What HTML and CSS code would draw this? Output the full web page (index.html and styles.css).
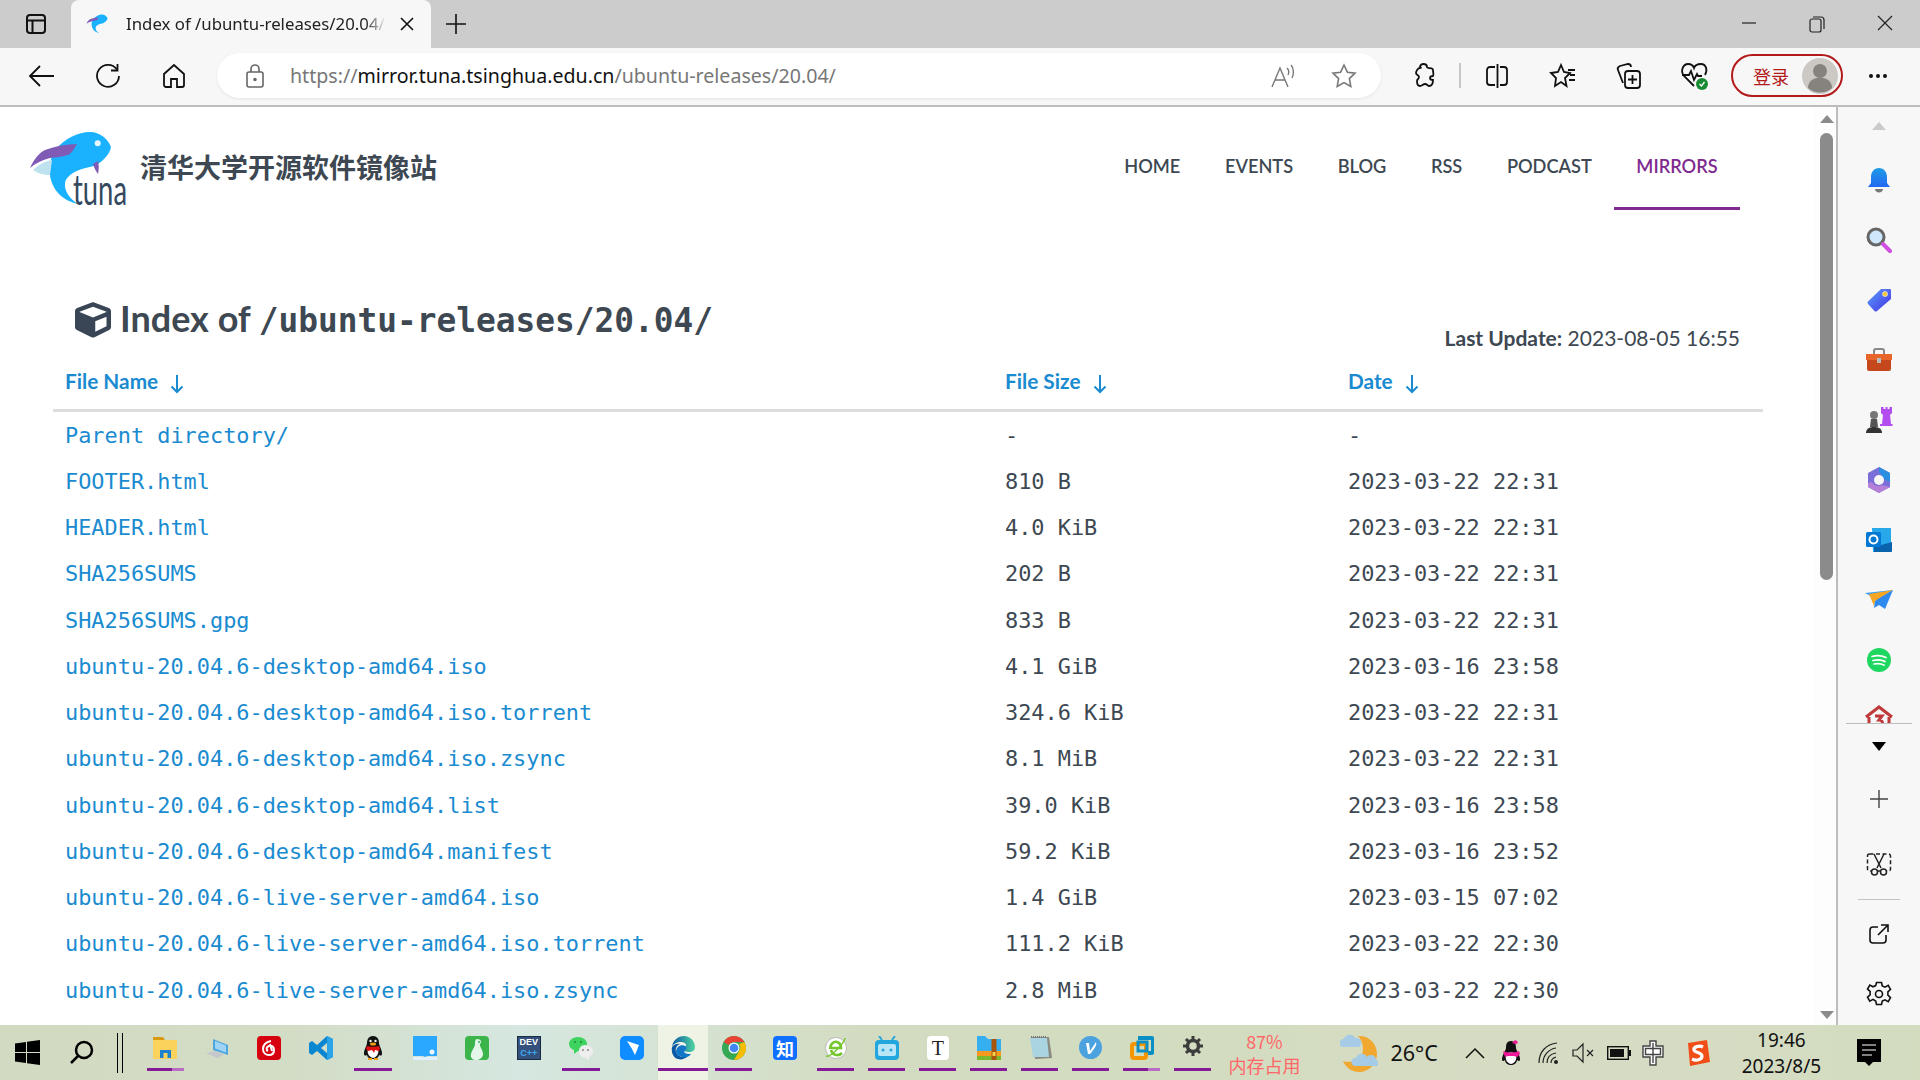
FILE: index.html
```html
<!DOCTYPE html>
<html>
<head>
    <title>Index of /ubuntu-releases/20.04/</title>
    <link rel="stylesheet" href="styles.css">
</head>
<body>

<!-- browser title bar -->
<div class="titlebar">
    <div class="tabs-btn">
        <svg width="24" height="24" viewBox="0 0 24 24" fill="none" stroke="#111" stroke-width="2"><rect x="3" y="3" width="18" height="18" rx="3"/><path d="M3 8.500h18M8.500 8.500V21"/></svg>
    </div>
    <div class="tab">
        <svg class="tab-icon" width="26" height="26" viewBox="0 0 100 76"><path d="M83 16C80 8 72 1 62 1 50 1 36 8 28 18c-6 8-7 18-6 26 2 16 14 26 28 29-8-5-14-13-13-21 1-8 13-14 25-16 10-2 20-12 21-20z" fill="#1ab2ff"/><path d="M2 37C6 28 11 22 17 19c10-4 22-6 32-6-3 5-5 9-9 11-6 2-12 2-18 3C14 29 8 32 2 37z" fill="#7f5bb5"/></svg>
        <span class="tab-title">Index of /ubuntu-releases/20.04/</span>
        <svg class="tab-close" width="16" height="16" viewBox="0 0 16 16" stroke="#111" stroke-width="1.600"><path d="M2 2l12 12M14 2L2 14"/></svg>
    </div>
    <svg class="new-tab" width="22" height="22" viewBox="0 0 22 22" stroke="#111" stroke-width="1.600"><path d="M11 1v20M1 11h20"/></svg>
    <div class="window-btns">
        <div class="window-btn"><svg width="16" height="16" viewBox="0 0 16 16" stroke="#222" stroke-width="1.200"><path d="M1 8h14"/></svg></div>
        <div class="window-btn"><svg width="18" height="18" viewBox="0 0 18 18" fill="none" stroke="#222" stroke-width="1.200"><rect x="2" y="4" width="11" height="13" rx="2"/><path d="M5 2h8a3 3 0 0 1 3 3v9"/></svg></div>
        <div class="window-btn"><svg width="16" height="16" viewBox="0 0 16 16" stroke="#222" stroke-width="1.200"><path d="M1 1l14 14M15 1L1 15"/></svg></div>
    </div>
</div>

<!-- address bar row -->
<div class="toolbar">
    <div class="tool-btn"><svg width="28" height="24" viewBox="0 0 28 24" fill="none" stroke="#111" stroke-width="1.800"><path d="M26 12H2M12 2L2 12l10 10"/></svg></div>
    <div class="tool-btn"><svg width="26" height="26" viewBox="0 0 26 26" fill="none" stroke="#111" stroke-width="1.800"><path d="M22 6.500A11 11 0 1 0 24 13"/><path d="M22.500 1v6.500H16"/></svg></div>
    <div class="tool-btn"><svg width="24" height="26" viewBox="0 0 24 26" fill="none" stroke="#111" stroke-width="1.800"><path d="M2 11L12 2l10 9v11a2 2 0 0 1-2 2h-5v-8H9v8H4a2 2 0 0 1-2-2z"/></svg></div>

    <div class="address">
        <svg class="lock" width="20" height="24" viewBox="0 0 20 24" fill="none" stroke="#666" stroke-width="1.600"><rect x="2" y="8" width="16" height="15" rx="2"/><path d="M6 8V5a4 4 0 0 1 8 0v3"/><circle cx="10" cy="15.500" r="1" fill="#666"/></svg>
        <span class="url">https://<b>mirror.tuna.tsinghua.edu.cn</b>/ubuntu-releases/20.04/</span>
        <div class="address-btn address-btn-first"><svg width="26" height="24" viewBox="0 0 26 24" fill="none" stroke="#777" stroke-width="1.400"><path d="M1 23L9 4l8 19M4 16h10"/><path d="M16 4c2 2 2 5 1 7M20 1c3 3 3 9 1 13"/></svg></div>
        <div class="address-btn"><svg width="26" height="26" viewBox="0 0 26 26" fill="none" stroke="#777" stroke-width="1.600"><path d="M13 2l3.400 7.200 7.600 1-5.600 5.400 1.400 7.800-6.800-3.800-6.800 3.800 1.400-7.800L2 10.200l7.600-1z"/></svg></div>
    </div>

    <div class="tool-btn tool-btn-first"><svg width="24" height="26" viewBox="0 0 24 26" fill="none" stroke="#111" stroke-width="1.800"><path d="M8 4c0-4 7-4 7 0 0 2 6 0 6 3 0 2 1 5 0 6-2 0-3 1-3 2s1 2 3 2c0 3-1 6-4 6-1 0-2-2-4-2s-3 2-5 2c-3 0-3-3-3-5s2-2 2-4-3-2-3-4 2-5 4-5 0-1 0-1z"/></svg></div>
    <div class="tool-sep"></div>
    <div class="tool-btn"><svg width="24" height="26" viewBox="0 0 24 26" fill="none" stroke="#111" stroke-width="1.800"><path d="M10 4H5a3 3 0 0 0-3 3v12a3 3 0 0 0 3 3h5M15 4h4a3 3 0 0 1 3 3v12a3 3 0 0 1-3 3h-4M12.500 1v24"/></svg></div>
    <div class="tool-btn"><svg width="28" height="28" viewBox="0 0 28 28" fill="none" stroke="#111" stroke-width="1.800"><path d="M12 3l3 7 6 1-5 5 1.500 8L12 20l-6 4 1-8-5-5 7-1z"/><path d="M19 8h7M21 13h5M20 18h6"/></svg></div>
    <div class="tool-btn"><svg width="26" height="28" viewBox="0 0 26 28" fill="none" stroke="#111" stroke-width="1.800"><path d="M7 21L2 8c-1-2 0-3 2-4l8-2c2 0 3 1 3 3"/><rect x="9" y="9" width="15" height="17" rx="3"/><path d="M16.500 13v9M12 17.500h9"/></svg></div>
    <div class="tool-btn">
        <svg width="30" height="30" viewBox="0 0 30 30" fill="none" stroke="#111" stroke-width="1.800"><path d="M14 25L4 15C0 10 3 3 8 3c3 0 5 1 6 4 1-3 4-4 7-4 5 0 7 6 4 11"/><path d="M2 14h7l2-4 3 9 3-6 1 2h4"/><circle cx="22" cy="23" r="6" fill="#1a8a34" stroke="none"/><path d="M19.500 23l2 2 3-4" stroke="#fff" stroke-width="1.400"/></svg>
    </div>
    <div class="signin">
        <span class="signin-text">登录</span>
        <svg class="avatar" width="36" height="36" viewBox="0 0 36 36"><circle cx="18" cy="18" r="18" fill="#ccc9c5"/><circle cx="18" cy="13" r="7" fill="#86827e"/><path d="M6 30c0-14 24-14 24 0a18 18 0 0 1-24 0z" fill="#86827e"/></svg>
    </div>
    <div class="more-btn"><span></span><span></span><span></span></div>
</div>

<div class="middle">
    <!-- the page itself -->
    <div class="page">
        <div class="site-header">
            <svg class="logo" width="102" height="78" viewBox="0 0 102 78">
                <path d="M83 16C80 8 72 1 62 1 50 1 36 8 28 18c-6 8-7 18-6 26 2 16 14 26 28 29-8-5-14-13-13-21 1-8 13-14 25-16 10-2 20-12 21-20z" fill="#1ab2ff"/>
                <path d="M5 39C10 34 17 30 24 29l-2 15C15 44 9 42 5 39z" fill="#bfe3ee"/>
                <path d="M2 37C6 28 11 22 17 19c10-4 22-6 32-6-3 5-5 9-9 11-6 2-12 2-18 3C14 29 8 32 2 37z" fill="#7f5bb5"/>
                <path d="M65 33l5-3c1 4 1 8 0 13-2-3-4-6-5-10z" fill="#7f5bb5"/>
                <circle cx="69.700" cy="12.300" r="3" fill="#e8f7ff"/>
                <text class="logo-text" x="45" y="74" textLength="54" lengthAdjust="spacingAndGlyphs">tuna</text>
            </svg>
            <div class="site-name">清华大学开源软件镜像站</div>
            <nav class="nav">
                <a>HOME</a>
                <a>EVENTS</a>
                <a>BLOG</a>
                <a>RSS</a>
                <a>PODCAST</a>
                <a class="active">MIRRORS</a>
            </nav>
        </div>

        <div class="index-head">
            <h1>
                <svg class="cube" width="36" height="36" viewBox="0 0 512 512"><path fill-rule="evenodd" d="M239.100 6.300l-208 78C12.400 91.300 0 109.300 0 129.300v225.100c0 18.200 10.300 34.800 26.500 42.900l208 104c13.500 6.800 29.400 6.800 42.900 0l208-104c16.300-8.100 26.500-24.800 26.500-42.900V129.300c0-20-12.400-37.900-31.100-44.900l-208-78C262 2.200 250 2.200 239.100 6.300zM256 68.400l192 72v1.100l-192 78-192-78v-1.100zM288 424.400V275.500l160-65v133.900z" fill="#3a4555"/></svg>
                <span>Index of <code>/ubuntu-releases/20.04/</code></span>
            </h1>
            <div class="last-update"><b>Last Update:</b> 2023-08-05 16:55</div>
        </div>

        <table class="files">
            <colgroup><col class="col-name"><col class="col-size"><col class="col-date"></colgroup>
            <thead>
                <tr>
                    <th>File Name <span class="arrow"><svg width="14" height="20" viewBox="0 0 14 20" fill="none" stroke="currentColor" stroke-width="2"><path d="M7 1v17M1.500 12.500L7 18l5.500-5.500"/></svg></span></th>
                    <th>File Size <span class="arrow"><svg width="14" height="20" viewBox="0 0 14 20" fill="none" stroke="currentColor" stroke-width="2"><path d="M7 1v17M1.500 12.500L7 18l5.500-5.500"/></svg></span></th>
                    <th>Date <span class="arrow"><svg width="14" height="20" viewBox="0 0 14 20" fill="none" stroke="currentColor" stroke-width="2"><path d="M7 1v17M1.500 12.500L7 18l5.500-5.500"/></svg></span></th>
                </tr>
            </thead>
            <tbody>
                <tr><td><a>Parent directory/</a></td><td>-</td><td>-</td></tr>
                <tr><td><a>FOOTER.html</a></td><td>810 B</td><td>2023-03-22 22:31</td></tr>
                <tr><td><a>HEADER.html</a></td><td>4.0 KiB</td><td>2023-03-22 22:31</td></tr>
                <tr><td><a>SHA256SUMS</a></td><td>202 B</td><td>2023-03-22 22:31</td></tr>
                <tr><td><a>SHA256SUMS.gpg</a></td><td>833 B</td><td>2023-03-22 22:31</td></tr>
                <tr><td><a>ubuntu-20.04.6-desktop-amd64.iso</a></td><td>4.1 GiB</td><td>2023-03-16 23:58</td></tr>
                <tr><td><a>ubuntu-20.04.6-desktop-amd64.iso.torrent</a></td><td>324.6 KiB</td><td>2023-03-22 22:31</td></tr>
                <tr><td><a>ubuntu-20.04.6-desktop-amd64.iso.zsync</a></td><td>8.1 MiB</td><td>2023-03-22 22:31</td></tr>
                <tr><td><a>ubuntu-20.04.6-desktop-amd64.list</a></td><td>39.0 KiB</td><td>2023-03-16 23:58</td></tr>
                <tr><td><a>ubuntu-20.04.6-desktop-amd64.manifest</a></td><td>59.2 KiB</td><td>2023-03-16 23:52</td></tr>
                <tr><td><a>ubuntu-20.04.6-live-server-amd64.iso</a></td><td>1.4 GiB</td><td>2023-03-15 07:02</td></tr>
                <tr><td><a>ubuntu-20.04.6-live-server-amd64.iso.torrent</a></td><td>111.2 KiB</td><td>2023-03-22 22:30</td></tr>
                <tr><td><a>ubuntu-20.04.6-live-server-amd64.iso.zsync</a></td><td>2.8 MiB</td><td>2023-03-22 22:30</td></tr>
            </tbody>
        </table>
    </div>

    <div class="scrollbar">
        <div class="scroll-up"></div>
        <div class="scroll-thumb"></div>
        <div class="scroll-down"></div>
    </div>

    <!-- edge sidebar -->
    <div class="sidebar">
        <div class="side-up"></div>
        <div class="side-list">
            <div class="side-item"><svg width="24" height="26" viewBox="0 0 24 26"><defs><linearGradient id="bell" x1="0" y1="0" x2="0" y2="1"><stop offset="0" stop-color="#1e9be8"/><stop offset="1" stop-color="#2468f0"/></linearGradient></defs><path d="M12 1c5 0 8 4 8 9v6l3 4H1l3-4v-6c0-5 3-9 8-9z" fill="url(#bell)"/><path d="M8 22h8c0 2-2 3.500-4 3.500S8 24 8 22z" fill="#777"/></svg></div>
            <div class="side-item"><svg width="26" height="26" viewBox="0 0 26 26"><circle cx="10" cy="10" r="8" fill="#cfe7fa" stroke="#666" stroke-width="3"/><path d="M17 17l7 7" stroke="#d14fe0" stroke-width="4" stroke-linecap="round"/></svg></div>
            <div class="side-item"><svg width="26" height="26" viewBox="0 0 26 26"><defs><linearGradient id="tag" x1="0" y1="0" x2="1" y2="1"><stop offset="0" stop-color="#5aa0ff"/><stop offset="1" stop-color="#4530e0"/></linearGradient></defs><path d="M15 2h9a1 1 0 0 1 1 1v9L11 24a2 2 0 0 1-2.500 0L2 17a2 2 0 0 1 0-2.500z" fill="url(#tag)"/><circle cx="19" cy="7" r="2.500" fill="#f4c430" stroke="#fff" stroke-width=".6"/></svg></div>
            <div class="side-item"><svg width="28" height="24" viewBox="0 0 28 24"><path d="M9 6V3a2 2 0 0 1 2-2h6a2 2 0 0 1 2 2v3" fill="none" stroke="#888" stroke-width="2"/><path d="M1 6h26v6H1z" fill="#e8662a"/><path d="M2 12h24v9a2 2 0 0 1-2 2H4a2 2 0 0 1-2-2z" fill="#c5481c"/><rect x="12" y="10" width="4" height="5" fill="#bbb"/></svg></div>
            <div class="side-item"><svg width="28" height="28" viewBox="0 0 28 28"><path d="M17 1h2.500v2h2V1h2v2h2V1H28v6l-2 2 1 9h1.500v2H16v-2h2l1-9-2-2z" fill="#b44df0" transform="translate(-1 0)"/><circle cx="9" cy="9" r="4" fill="#777"/><path d="M6 13h6l1 8H5z" fill="#555"/><path d="M1 27c0-4 3-6 8-6s8 2 8 6z" fill="#333"/></svg></div>
            <div class="side-item"><svg width="26" height="28" viewBox="0 0 26 28"><path d="M13 1l11 6v14l-11 6L2 21V7z" fill="#7a6ed8"/><path d="M13 1l11 6v9l-8-4c0-3-1-5-3-5z" fill="#2a8fe0"/><path d="M2 17l4-1c2 4 6 5 10 3l8 2-11 6L2 21z" fill="#b67fd8"/><circle cx="13" cy="14" r="5" fill="#f7f7f7"/></svg></div>
            <div class="side-item"><svg width="26" height="26" viewBox="0 0 26 26"><path d="M6 1h19v15l-6 9H7z" fill="#28a8ea"/><path d="M8 20l18-5v9a1 1 0 0 1-1 1H8z" fill="#0a64ad"/><rect x="0" y="5" width="15" height="15" rx="1.500" fill="#0078d4"/><circle cx="7.500" cy="12.500" r="4" fill="none" stroke="#fff" stroke-width="2"/></svg></div>
            <div class="side-item"><svg width="28" height="20" viewBox="0 0 28 20"><path d="M0 3l28-3-12 12z" fill="#3aa0f5"/><path d="M4 4l24-4-18 11-1 5z" fill="#f5a623"/><path d="M10 11L28 0 20 19l-6-4-5 3z" fill="#2f8af0"/></svg></div>
            <div class="side-item"><svg width="24" height="24" viewBox="0 0 24 24" fill="none"><circle cx="12" cy="12" r="12" fill="#1ed760"/><path d="M5 8.500c5-1.500 10-1 14 1M6 12.500c4-1 9-.8 12 1M7 16c3-.7 7-.5 10 1" stroke="#fff" stroke-width="1.700" stroke-linecap="round"/></svg></div>
            <div class="side-item side-house"><svg width="28" height="28" viewBox="0 0 28 28" fill="none" stroke="#c0393b" stroke-width="3"><path d="M1 12L14 2l13 10M4 12v14h20V12"/><path d="M10 11h7l-3 4c3 0 4 2 3 4s-5 2-7 0"/></svg></div>
        </div>
        <div class="side-down"></div>
        <div class="side-btn side-plus"><svg width="20" height="20" viewBox="0 0 20 20" stroke="#444" stroke-width="1.400"><path d="M10 1v18M1 10h18"/></svg></div>
        <div class="side-btn side-shot"><svg width="26" height="24" viewBox="0 0 26 24" fill="none" stroke="#222" stroke-width="1.500"><rect x="1.500" y="1" width="23" height="17" rx="2" stroke-dasharray="4 2.500"/><path d="M8 1l7 14M18 1l-7 14"/><circle cx="8.500" cy="19" r="3" fill="#f7f7f7"/><circle cx="17.500" cy="19" r="3" fill="#f7f7f7"/></svg></div>
        <div class="side-rule"></div>
        <div class="side-btn side-share"><svg width="20" height="20" viewBox="0 0 20 20" fill="none" stroke="#111" stroke-width="1.600"><path d="M9 3H4a3 3 0 0 0-3 3v10a3 3 0 0 0 3 3h10a3 3 0 0 0 3-3v-5M12 1h7v7M19 1L9 11"/></svg></div>
        <div class="side-btn side-gear"><svg width="26" height="26" viewBox="0 0 26 26" fill="none" stroke="#111" stroke-width="1.600"><circle cx="13" cy="13" r="3.500"/><path d="M10.500 1.500h5l.8 3.500 2.700 1.200 3.200-1.800 2.300 4-2.600 2.400v3.400l2.600 2.400-2.300 4-3.200-1.800-2.700 1.200-.8 3.500h-5l-.8-3.500L7 18.400l-3.200 1.800-2.300-4 2.600-2.400v-3.400L1.500 8l2.300-4L7 5.800 9.700 4.600z"/></svg></div>
    </div>
</div>

<!-- windows taskbar -->
<div class="taskbar">
    <div class="task-win"><svg width="25" height="25" viewBox="0 0 25 25" fill="#000"><path d="M0 3.500l11-1.500v10H0zM12 1.800L25 0v12H12zM0 13h11v10L0 21.500zM12 13h13v12l-13-1.800z"/></svg></div>
    <div class="task-search"><svg width="25" height="25" viewBox="0 0 25 25" fill="none" stroke="#000" stroke-width="2.500"><circle cx="15" cy="10" r="8"/><path d="M9 16l-7 7"/></svg></div>
    <div class="task-sep"></div>

    <div class="task-item running part"><svg width="24" height="24" viewBox="0 0 24 24"><path d="M0 1h10l2 3h-12z" fill="#d99a10"/><path d="M0 4h24v19H0z" fill="#fbd35c"/><path d="M7 14h11v8h-3.500v-5h-4v5H7z" fill="#1a80d0"/></svg></div>
    <div class="task-item"><svg width="24" height="24" viewBox="0 0 24 24"><path d="M8 3l15 6v10L8 14z" fill="#4ea6de"/><path d="M10 5l11 4.500v7L10 12.500z" fill="#9fd4f5"/><path d="M1 17l9-2 9 4-7 3z" fill="#c4c8cc"/></svg></div>
    <div class="task-item"><svg width="24" height="24" viewBox="0 0 24 24"><rect width="24" height="24" rx="4" fill="#d7000f"/><path d="M14 5c-5 1-8 4-8 8 0 4 3 6 6 6s5-2 5-5-2-5-5-4-3 4-1 5M13 8l2 7" fill="none" stroke="#fff" stroke-width="2"/></svg></div>
    <div class="task-item"><svg width="24" height="24" viewBox="0 0 24 24"><path d="M18 0l6 3v18l-6 3-10-9-5 4-3-2V7l3-2 5 4zM18 7l-6 5 6 5z" fill="#0a87d0"/><path d="M18 0l6 3v18l-6 3z" fill="#2aa3e8"/></svg></div>
    <div class="task-item running"><svg width="22" height="24" viewBox="0 0 22 24"><path d="M11 0c4 0 6 3 6 7 0 2 3 7 3 10 0 3-1 3-3 2 0 2-3 4-6 4s-6-2-6-4c-2 1-3 1-3-2 0-3 3-8 3-10 0-4 2-7 6-7z" fill="#111"/><path d="M6 13c2-2 8-2 10 0 1 3 0 8-5 9-5-1-6-6-5-9z" fill="#fff"/><path d="M5 10c3 1 9 1 12 0l1 3-1 2-4-1-1 3-2-3-4 1-2-2z" fill="#e01010"/><ellipse cx="11" cy="8" rx="3" ry="1.500" fill="#f5a010"/><circle cx="8.500" cy="5" r="1.200" fill="#fff"/><circle cx="13.500" cy="5" r="1.200" fill="#fff"/><path d="M6 23h4M12 23h4" stroke="#f5a010" stroke-width="2"/></svg></div>
    <div class="task-item"><svg width="24" height="24" viewBox="0 0 24 24"><path d="M0 0h24v20H14l-2 1-2-1H0z" fill="#2aa8ff"/><path d="M0 21h24v3H0z" fill="#dff1ff"/><circle cx="19" cy="16" r="2.500" fill="#e8f6ff"/></svg></div>
    <div class="task-item"><svg width="24" height="24" viewBox="0 0 24 24"><rect width="24" height="24" rx="4" fill="#3bb54a"/><path d="M12 3c4 0 5 3 3 5-1 2 3 6 3 10 0 4-4 6-7 6s-6-2-5-6 3-6 4-9c0-3 0-6 2-6z" fill="#e4f6ea"/><circle cx="14" cy="6" r="1" fill="#3bb54a"/></svg></div>
    <div class="task-item"><div class="dev-icon"><span>DEV</span><span class="cpp">C++</span></div></div>
    <div class="task-item running"><svg width="24" height="24" viewBox="0 0 24 24"><path d="M9 1c5 0 9 3 9 7s-4 7-9 7l-4 3v-4C2 13 0 11 0 8c0-4 4-7 9-7z" fill="#3ed35e"/><path d="M16 9c4 0 8 3 8 6s-2 5-4 6v3l-3-2c-5 0-7-4-7-7s2-6 6-6z" fill="#eee"/><circle cx="6" cy="6" r="1" fill="#1c8a38"/><circle cx="12" cy="6" r="1" fill="#1c8a38"/><circle cx="14" cy="14" r="1" fill="#888"/><circle cx="19" cy="14" r="1" fill="#888"/></svg></div>
    <div class="task-item"><svg width="24" height="24" viewBox="0 0 24 24"><rect width="24" height="24" rx="5" fill="#0f8cff"/><path d="M7 5l12 4-4 10-3-6z" fill="#fff"/></svg></div>
    <div class="task-item task-active running"><svg width="24" height="24" viewBox="0 0 24 24"><defs><linearGradient id="edge" x1="0" y1="0" x2="1" y2="0"><stop offset="0" stop-color="#0c59a4"/><stop offset="1" stop-color="#50d6a0"/></linearGradient></defs><path d="M1 11C2 4 7 0 13 0c6 0 11 5 11 11 0 4-3 5-6 5-4 0-6-2-6-2 0-3 3-3 3-5s-3-3-5-3C6 6 2 8 1 11z" fill="url(#edge)"/><path d="M1 11c2-3 6-4 8-3-3 1-5 4-4 8 1 4 6 6 12 4-3 3-7 4-10 3-5-1-7-7-6-12z" fill="#0c59a4"/><path d="M5 16c0-5 5-8 9-6 3 2 0 4-1 6 2 2 4 2 7 2-2 3-6 4-9 3-4-1-6-3-6-5z" fill="#1277c8"/></svg></div>
    <div class="task-item running"><svg width="24" height="24" viewBox="0 0 24 24"><circle cx="12" cy="12" r="12" fill="#34a853"/><path d="M12 0a12 12 0 0 1 10.400 6H12a6 6 0 0 0-5.200 3L1.700 6A12 12 0 0 1 12 0z" fill="#ea4335"/><path d="M22.400 6A12 12 0 0 1 12 24l5.200-9A6 6 0 0 0 17 8z" fill="#fbbc05"/><circle cx="12" cy="12" r="5.500" fill="#fff"/><circle cx="12" cy="12" r="4.300" fill="#4285f4"/></svg></div>
    <div class="task-item"><div class="zhihu-icon">知</div></div>
    <div class="task-item running"><svg width="24" height="24" viewBox="0 0 24 24" fill="none"><circle cx="12" cy="12" r="10.500" fill="#fff" stroke="#bbb"/><path d="M6 13c0-5 4-8 7-7s4 3 4 6H7m0 2c1 5 7 7 11 3" stroke="#76c72d" stroke-width="2.600"/><path d="M2 20C6 22 20 8 21 2" stroke="#76c72d" stroke-width="1.500"/></svg></div>
    <div class="task-item running"><svg width="24" height="24" viewBox="0 0 24 24" fill="none"><rect y="4" width="24" height="20" rx="4" fill="#21a6dd"/><rect x="3" y="8" width="18" height="12" rx="2" fill="#b8e6f6"/><path d="M7 4L4 0M17 4l3-4" stroke="#21a6dd" stroke-width="2"/><circle cx="8" cy="14" r="1.500" fill="#21a6dd"/><circle cx="16" cy="14" r="1.500" fill="#21a6dd"/></svg></div>
    <div class="task-item running"><div class="typora-icon">T</div></div>
    <div class="task-item running"><svg width="24" height="24" viewBox="0 0 24 24"><path d="M0 0h8l3 3h13v13H0z" fill="#36aff0"/><path d="M0 15h24v5H0z" fill="#f59a1f"/><path d="M0 20h24v4H0z" fill="#7ab82e"/><rect x="14.500" y="3" width="5" height="21" fill="#a8560f"/><rect x="15.500" y="16" width="3" height="4" fill="#f5d04a"/></svg></div>
    <div class="task-item running"><svg width="24" height="24" viewBox="0 0 24 24"><path d="M4 1h17l3 21-17 1z" fill="#8a8a82"/><path d="M2 2h17l2 19H5z" fill="#a9d4e0"/><path d="M3 1h16" stroke="#777" stroke-width="2" stroke-dasharray="1 1"/></svg></div>
    <div class="task-item running"><svg width="23" height="23" viewBox="0 0 23 23"><circle cx="11.500" cy="11.500" r="11.500" fill="#4ba2de"/><path d="M7 7h3l1 8 6-9c1 3-1 6-6 12H9z" fill="#fff"/></svg></div>
    <div class="task-item running part"><svg width="24" height="24" viewBox="0 0 24 24" fill="none"><path d="M8 3h13a2 2 0 0 1 2 2v11a2 2 0 0 1-2 2h-4" stroke="#0a8fc4" stroke-width="4" transform="translate(0 -1)"/><rect x="2" y="8" width="14" height="14" rx="2" stroke="#f59500" stroke-width="4"/><path d="M8 15V6h9v9z" stroke="#0a8fc4" stroke-width="3"/></svg></div>
    <div class="task-item running"><svg width="20" height="20" viewBox="0 0 20 20" fill="none" stroke="#3c3c3c"><circle cx="10" cy="10" r="5.500" stroke-width="3.500"/><path d="M10 0v4M10 16v4M0 10h4M16 10h4M3 3l3 3M14 14l3 3M17 3l-3 3M6 14l-3 3" stroke-width="3"/></svg></div>

    <div class="memory"><span>87%</span><span>内存占用</span></div>
    <div class="weather-icon"><svg width="38" height="38" viewBox="0 0 38 38"><path d="M18 2c10-1 19 7 19 18 0 10-8 18-18 18C12 38 6 34 3 27c10 3 20-2 20-12 0-5-2-10-5-13z" fill="#f0a830"/><path d="M3 13a4 4 0 0 1 1-8 6 6 0 0 1 11-1 5 5 0 0 1 4 9z" fill="#a5cbe6"/><path d="M15 32a4 4 0 0 1 1-8 6 6 0 0 1 11-1 5 5 0 0 1 9 3 3 3 0 0 1 0 6z" fill="#a5cbe6"/></svg></div>
    <div class="temp">26°C</div>
    <div class="tray tray-chevron"><svg width="20" height="12" viewBox="0 0 20 12" fill="none" stroke="#111" stroke-width="1.500"><path d="M1 11l9-9 9 9"/></svg></div>
    <div class="tray tray-qq"><svg width="20" height="28" viewBox="0 0 20 28"><path d="M10 2c4 0 5 3 5 7 0 2 4 7 4 11 0 3-2 2-3 1 0 3-3 5-6 5s-6-2-6-5c-1 1-3 2-3-1 0-4 4-9 4-11 0-4 1-7 5-7z" fill="#111"/><path d="M5 15c2-2 8-2 10 0 1 4 0 9-5 10-5-1-6-6-5-10z" fill="#fff"/><path d="M2 12c5 2 11 2 16 0l1 3-3 3-3-1H7l-3 1z" fill="#f0189a"/><path d="M11 4l3-3 2 1 1 2-2 1z" fill="#f0189a"/></svg></div>
    <div class="tray tray-wifi"><svg width="22" height="22" viewBox="0 0 22 22" fill="none" stroke="#222" stroke-width="1.200"><path d="M1 21C1 10 8 2 19 1M5 21C5 13 11 7 18 6M9 21c0-5 3-9 9-10M13 21c0-3 2-5 5-6"/><circle cx="18" cy="20" r="2" fill="#222" stroke="none"/></svg></div>
    <div class="tray tray-sound"><svg width="22" height="22" viewBox="0 0 22 22" fill="none" stroke="#222" stroke-width="1.200"><path d="M1 8h4l6-6v18l-6-6H1z"/><path d="M15 8l6 6M21 8l-6 6"/></svg></div>
    <div class="tray tray-battery"><svg width="24" height="14" viewBox="0 0 24 14"><rect x=".7" y=".7" width="20.600" height="12.600" fill="none" stroke="#111" stroke-width="1.400"/><rect x="3" y="3" width="14" height="8" fill="#111"/><rect x="22" y="4" width="2" height="6" fill="#111"/></svg></div>
    <div class="tray tray-ime"><svg width="22" height="26" viewBox="0 0 22 26" fill="#fff" stroke="#444" stroke-width="1.400"><path d="M8 1h6v5h7v11h-7v8H8v-8H1V6h7z"/><path d="M3.500 8.500h15v6h-15zM11 3v20" fill="none"/></svg></div>
    <div class="tray tray-sogou"><svg width="25" height="26" viewBox="0 0 25 26"><path d="M3 3l19-3 3 22-20 4z" fill="#f04e16"/><path d="M18 7c-4-2-10 0-9 3s8 2 8 6-6 5-10 3" fill="none" stroke="#fff" stroke-width="3.200"/></svg></div>
    <div class="clock"><span>19:46</span><span>2023/8/5</span></div>
    <div class="notify"><svg width="24" height="28" viewBox="0 0 24 28"><path d="M0 0h24v23h-8l-4 4-4-4H0z" fill="#000"/><path d="M5 6h14M5 11h14M5 16h10" stroke="#fff" stroke-width="1.200"/></svg></div>
</div>

</body>
</html>
```

FILE: styles.css
```css
* {
    box-sizing: border-box;
}
html, body {
    margin: 0;
    height: 1080px;
    overflow: hidden;
}
body {
    display: flex;
    flex-direction: column;
    font-family: "Lato", "Noto Sans CJK SC", sans-serif;
    background-color: #fff;
}
svg {
    display: block;
}

/* title bar */
.titlebar {
    height: 48px;
    flex: none;
    display: flex;
    align-items: center;
    background-color: #cccccc;
}
.tabs-btn {
    width: 71px;
    display: flex;
    justify-content: center;
}
.tab {
    width: 360px;
    height: 48px;
    align-self: flex-end;
    display: flex;
    align-items: center;
    background-color: #f7f7f7;
    border-radius: 8px 8px 0 0;
}
.tab-icon {
    margin-left: 15px;
    margin-right: 14px;
}
.tab-title {
    width: 260px;
    margin-top: -2px;
    white-space: nowrap;
    overflow: hidden;
    font-family: "Noto Sans", sans-serif;
    font-size: 16.800px;
    color: #222;
    -webkit-mask-image: linear-gradient(to right, #000 92%, transparent);
    mask-image: linear-gradient(to right, #000 92%, transparent);
}
.tab-close {
    margin-left: 13px;
}
.new-tab {
    margin-left: 14px;
}
.window-btns {
    margin-left: auto;
    margin-right: 1px;
    display: flex;
}
.window-btn {
    width: 68px;
    display: flex;
    justify-content: center;
}

/* address bar row */
.toolbar {
    height: 59px;
    flex: none;
    display: flex;
    align-items: center;
    padding-left: 9px;
    padding-bottom: 2px;
    background-color: #f7f7f7;
    border-bottom: 2px solid #bdbdbd;
}
.tool-btn {
    width: 66px;
    display: flex;
    justify-content: center;
}
.tool-btn-first {
    margin-left: 10px;
}
.tool-sep {
    width: 2px;
    height: 25px;
    margin: 0 3px 0 2px;
    background-color: #c8c8c8;
}
.address {
    width: 1164px;
    height: 45px;
    margin-left: 10px;
    display: flex;
    align-items: center;
    background-color: #fff;
    border-radius: 23px;
    box-shadow: 0 1px 3px rgba(0, 0, 0, 0.08);
}
.lock {
    margin-left: 28px;
    margin-right: 25px;
}
.url {
    font-family: "Noto Sans", sans-serif;
    font-size: 19.600px;
    color: #777;
    white-space: nowrap;
}
.url b {
    font-weight: 400;
    color: #111;
}
.address-btn {
    width: 60px;
    display: flex;
    justify-content: center;
}
.address-btn-first {
    margin-left: auto;
}
.address-btn:last-child {
    margin-right: 7px;
}
.signin {
    width: 112px;
    height: 43px;
    margin-left: 3px;
    display: flex;
    align-items: center;
    border: 2px solid #b31b1b;
    border-radius: 22px;
}
.signin-text {
    margin-left: 20px;
    font-family: "Noto Sans CJK SC", sans-serif;
    font-size: 18px;
    color: #b31b1b;
}
.avatar {
    margin-left: auto;
    margin-right: 3px;
}
.more-btn {
    width: 70px;
    display: flex;
    justify-content: center;
    gap: 3px;
}
.more-btn span {
    width: 4px;
    height: 4px;
    border-radius: 50%;
    background-color: #111;
}

/* middle area */
.middle {
    flex: 1;
    min-height: 0;
    display: flex;
}
.page {
    width: 1813px;
    flex: none;
    overflow: hidden;
    background-color: #fff;
}
.site-header {
    height: 103px;
    display: flex;
    align-items: flex-start;
    padding-right: 73px;
}
.logo {
    margin-left: 28px;
    margin-top: 24px;
    overflow: visible;
}
.logo-text {
    font-family: "Lato", sans-serif;
    font-size: 42px;
    fill: #34495e;
}
.site-name {
    margin-left: 10px;
    margin-top: 40px;
    font-family: "Noto Sans CJK SC", sans-serif;
    font-size: 27px;
    line-height: 40px;
    font-weight: 700;
    color: #3d4852;
}
.nav {
    margin-left: auto;
    display: flex;
}
.nav a {
    height: 103px;
    padding: 46px 22.300px 0;
    font-size: 18.200px;
    line-height: 26px;
    font-weight: 600;
    color: #3d4852;
    border-bottom: 3px solid transparent;
}
.nav a.active {
    color: #802a8f;
    border-bottom-color: #802a8f;
}
.index-head {
    height: 143px;
    padding: 86px 73px 0 75px;
    display: flex;
    justify-content: space-between;
    align-items: flex-start;
}
h1 {
    margin: 0;
    display: flex;
    align-items: center;
    font-size: 36px;
    line-height: 44px;
    font-weight: 700;
    color: #3d4852;
    white-space: nowrap;
}
.cube {
    margin-right: 9px;
}
h1 code {
    font-family: "DejaVu Sans Mono", monospace;
    font-size: 32.800px;
    font-weight: 700;
}
.last-update {
    margin-top: 29px;
    font-size: 21px;
    line-height: 26px;
    color: #3d4852;
}
.files {
    width: 1710px;
    margin-left: 53px;
    border-collapse: separate;
    border-spacing: 0;
    table-layout: fixed;
}
.col-name {
    width: 940px;
}
.col-size {
    width: 343px;
}
.col-date {
    width: 427px;
}
.files th {
    height: 59px;
    padding: 0 12px;
    text-align: left;
    font-size: 20.800px;
    font-weight: 700;
    color: #1a8bd0;
    border-bottom: 3px solid #dddddd;
}
.arrow {
    display: inline-block;
    margin-left: 7px;
    vertical-align: -5px;
}
.files td {
    height: 46.250px;
    padding: 0 12px;
    font-family: "DejaVu Sans Mono", monospace;
    font-size: 21.900px;
    color: #3d4852;
    white-space: nowrap;
}
.files td a {
    color: #1a8bd0;
}

/* page scrollbar */
.scrollbar {
    width: 25px;
    flex: none;
    position: relative;
    background-color: #fdfdfd;
    border-right: 2px solid #bdbdbd;
}
.scroll-thumb {
    position: absolute;
    left: 7px;
    top: 26px;
    width: 13px;
    height: 447px;
    border-radius: 7px;
    background-color: #8b8b8b;
}
.scroll-up, .scroll-down {
    position: absolute;
    left: 7px;
    width: 0;
    height: 0;
    border-left: 7px solid transparent;
    border-right: 7px solid transparent;
}
.scroll-up {
    top: 8px;
    border-bottom: 8px solid #8b8b8b;
}
.scroll-down {
    bottom: 6px;
    border-top: 8px solid #8b8b8b;
}

/* sidebar */
.sidebar {
    flex: 1;
    display: flex;
    flex-direction: column;
    align-items: center;
    background-color: #f7f7f7;
}
.side-up {
    width: 0;
    height: 0;
    margin-top: 15px;
    margin-bottom: 20px;
    border-left: 7.500px solid transparent;
    border-right: 7.500px solid transparent;
    border-bottom: 8px solid #cbcbcb;
}
.side-list {
    width: 66px;
    height: 574px;
    overflow: hidden;
    border-bottom: 1px solid #bdbdbd;
    flex: none;
}
.side-item {
    height: 60px;
    display: flex;
    align-items: center;
    justify-content: center;
}
.side-house {
    align-items: flex-start;
    padding-top: 15px;
}
.side-down {
    width: 0;
    height: 0;
    margin-top: 18px;
    border-left: 7.500px solid transparent;
    border-right: 7.500px solid transparent;
    border-top: 9px solid #000;
}
.side-btn {
    display: flex;
    justify-content: center;
    align-items: center;
}
.side-plus {
    height: 64px;
    margin-top: 16px;
}
.side-shot {
    height: 68px;
}
.side-rule {
    width: 42px;
    height: 1px;
    background-color: #c4c4c4;
}
.side-share {
    height: 67px;
}
.side-gear {
    height: 53px;
}

/* taskbar */
.taskbar {
    height: 55px;
    flex: none;
    display: flex;
    align-items: center;
    background: linear-gradient(90deg, #d2dbc1 0%, #d3dcc5 15%, #d5e7e0 27%, #d6e3d4 35%, #d3dcc1 45%, #d2dcbf 60%, #d6dcc2 75%, #d6dcc4 85%, #d3dcbf 100%);
}
.task-win {
    width: 55px;
    display: flex;
    justify-content: center;
}
.task-search {
    width: 52px;
    display: flex;
    justify-content: center;
}
.task-sep {
    width: 6px;
    height: 40px;
    margin-left: 10px;
    margin-right: 16.500px;
    border-left: 1.500px solid #000;
    border-right: 1.500px solid #000;
}
.task-item {
    width: 51.900px;
    height: 55px;
    flex: none;
    position: relative;
    display: flex;
    justify-content: center;
    padding-top: 11px;
}
.task-item.task-active {
    width: 50px;
    background-color: #eff3e6;
}
.task-active ~ .task-item {
    width: 51px;
}
.task-item.running::after {
    content: "";
    position: absolute;
    left: 7px;
    right: 7px;
    bottom: 9px;
    height: 3px;
    background-color: #851a96;
}
.task-item.part::after {
    background: linear-gradient(90deg, #851a96 67%, #b96cc3 67%);
}
.task-active.running::after {
    left: 0;
    right: 0;
}
.dev-icon {
    width: 24px;
    height: 24px;
    display: flex;
    flex-direction: column;
    align-items: center;
    font-family: "Liberation Sans", sans-serif;
    font-size: 9px;
    line-height: 11px;
    font-weight: 700;
    color: #fff;
    background-color: #34507c;
    border: 1px solid #1a2a40;
}
.dev-icon .cpp {
    color: #3fa8ef;
}
.zhihu-icon {
    width: 24px;
    height: 24px;
    text-align: center;
    font-family: "Noto Sans CJK SC", sans-serif;
    font-size: 18px;
    line-height: 24px;
    font-weight: 700;
    color: #fff;
    background-color: #0f6fff;
    border-radius: 4px;
}
.typora-icon {
    width: 22px;
    height: 24px;
    text-align: center;
    font-family: "Liberation Serif", serif;
    font-size: 20px;
    line-height: 24px;
    color: #222;
    background-color: #fff;
    border-radius: 4px;
}
.memory {
    width: 92px;
    display: flex;
    flex-direction: column;
    align-items: center;
    font-family: "Noto Sans CJK SC", sans-serif;
    font-size: 18px;
    line-height: 24px;
    color: #ff6668;
    white-space: nowrap;
}
.weather-icon {
    width: 50px;
    margin-left: 24px;
    display: flex;
    justify-content: center;
}
.temp {
    width: 62px;
    padding-left: 6px;
    font-family: "Noto Sans", sans-serif;
    font-size: 21.500px;
    color: #111;
}
.tray {
    display: flex;
    justify-content: center;
}
.tray-chevron {
    width: 36px;
    margin-left: 11px;
}
.tray-qq {
    width: 36px;
}
.tray-wifi {
    width: 40px;
}
.tray-sound {
    width: 28px;
}
.tray-battery {
    width: 44px;
}
.tray-ime {
    width: 24px;
}
.tray-sogou {
    width: 44px;
    margin-left: 10px;
}
.clock {
    width: 124px;
    display: flex;
    flex-direction: column;
    align-items: center;
    font-family: "Noto Sans", sans-serif;
    font-size: 19px;
    line-height: 26px;
    color: #111;
}
.notify {
    width: 52px;
    display: flex;
    justify-content: center;
}
```
